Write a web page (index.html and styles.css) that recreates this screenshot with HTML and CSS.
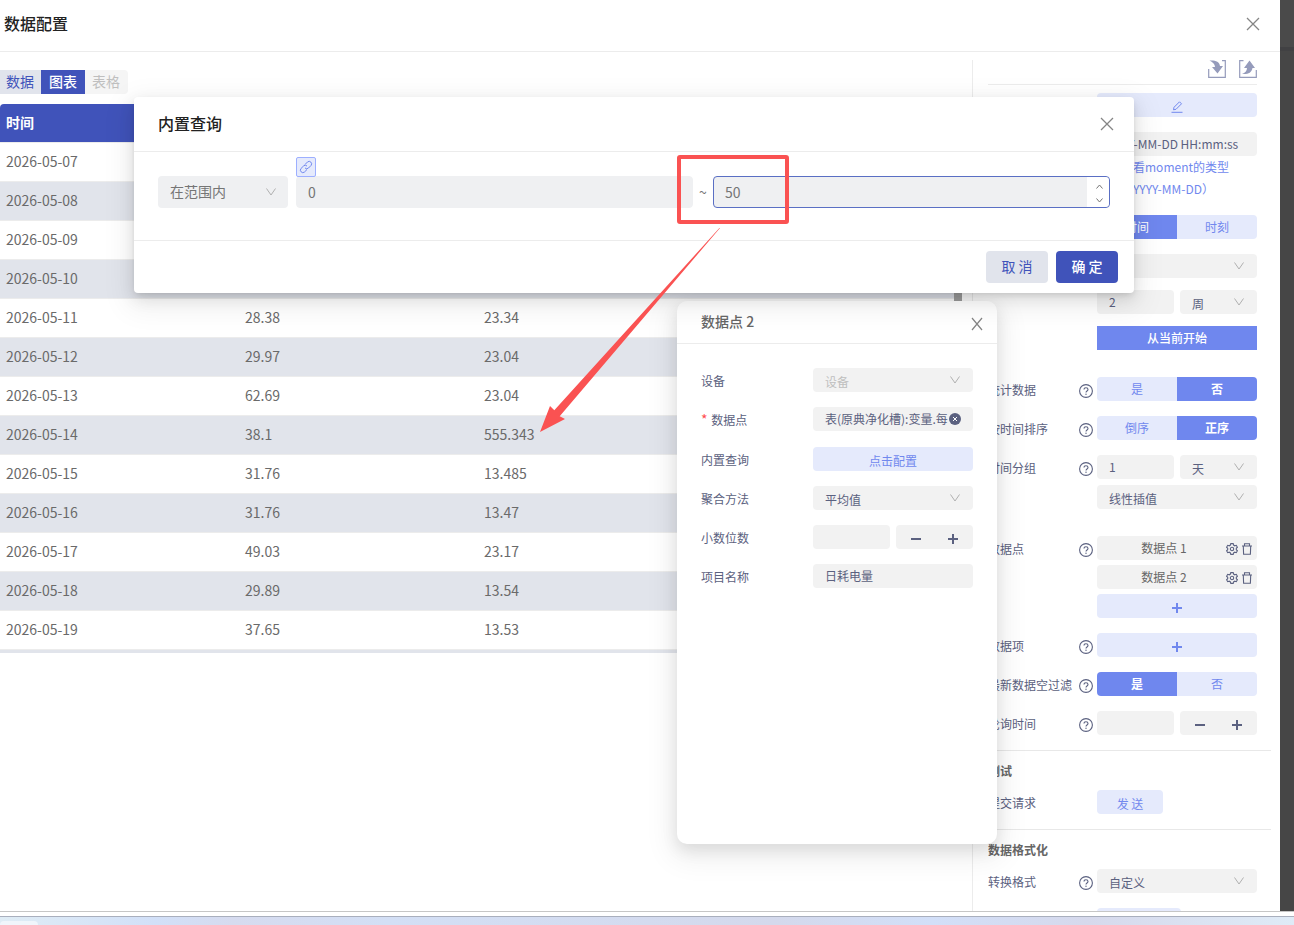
FILE: index.html
```html
<!DOCTYPE html>
<html lang="zh-CN">
<head>
  <meta charset="utf-8">
  <title>数据配置</title>
  <link rel="stylesheet" href="styles.css">
</head>
<body>
  <!-- shared icons -->
  <svg class="icon-defs" aria-hidden="true">
    <symbol id="close" viewBox="0 0 14 14"><path d="M1 1l12 12M13 1L1 13" fill="none" stroke="currentColor" stroke-width="1.3"/></symbol>
    <symbol id="down" viewBox="0 0 10 8"><path d="M0.5 0.5L5 7L9.500 0.5" fill="none" stroke="currentColor"/></symbol>
    <symbol id="help" viewBox="0 0 14 14"><circle cx="7" cy="7" r="6.400" fill="none" stroke="currentColor" stroke-width="1.100"/><path d="M5 5.600c0-1.200.9-1.900 2-1.900s2 .7 2 1.800c0 1.500-2 1.500-2 3" fill="none" stroke="currentColor" stroke-width="1.100"/><circle cx="7" cy="10.200" r=".7" fill="currentColor"/></symbol>
    <symbol id="plus" viewBox="0 0 10 10"><path d="M0 5h10M5 0v10" stroke="currentColor" stroke-width="2"/></symbol>
    <symbol id="minus" viewBox="0 0 10 10"><path d="M0 5h10" stroke="currentColor" stroke-width="2"/></symbol>
    <symbol id="gear" viewBox="0 0 12 12"><path d="M4.800.6h2.400l.4 1.500 1.200.7 1.500-.5 1.100 1.900-1.100 1.100v1.400l1.100 1.100-1.100 1.900-1.500-.5-1.200.7-.4 1.500H4.800l-.4-1.500-1.200-.7-1.500.5L.6 7.800l1.100-1.100V5.300L.6 4.200l1.100-1.900 1.500.5 1.200-.7z" fill="none" stroke="currentColor" stroke-width="1.100"/><circle cx="6" cy="6" r="1.700" fill="none" stroke="currentColor" stroke-width="1.100"/></symbol>
    <symbol id="trash" viewBox="0 0 12 12"><path d="M1 3h10M3.500 3V.8h5V3M2.300 3l.3 8.300h6.800L9.700 3" fill="none" stroke="currentColor" stroke-width="1.100"/></symbol>
  </svg>

  <div class="screen">
    <div class="drawer">
      <header class="drawer-header">
        <h1>数据配置</h1>
        <button class="icon-btn" aria-label="关闭"><svg width="14" height="14"><use href="#close"/></svg></button>
      </header>

      <div class="drawer-body">
        <main class="preview">
          <div class="tabs">
            <button class="tab">数据</button>
            <button class="tab active">图表</button>
            <button class="tab" disabled>表格</button>
          </div>
          <div class="table-wrap">
            <table>
              <thead><tr><th>时间</th><th></th><th></th><th></th></tr></thead>
              <tbody>
                <tr><td>2026-05-07</td><td></td><td></td><td></td></tr>
                <tr><td>2026-05-08</td><td></td><td></td><td></td></tr>
                <tr><td>2026-05-09</td><td></td><td></td><td></td></tr>
                <tr><td>2026-05-10</td><td></td><td></td><td></td></tr>
                <tr><td>2026-05-11</td><td>28.38</td><td>23.34</td><td></td></tr>
                <tr><td>2026-05-12</td><td>29.97</td><td>23.04</td><td></td></tr>
                <tr><td>2026-05-13</td><td>62.69</td><td>23.04</td><td></td></tr>
                <tr><td>2026-05-14</td><td>38.1</td><td>555.343</td><td></td></tr>
                <tr><td>2026-05-15</td><td>31.76</td><td>13.485</td><td></td></tr>
                <tr><td>2026-05-16</td><td>31.76</td><td>13.47</td><td></td></tr>
                <tr><td>2026-05-17</td><td>49.03</td><td>23.17</td><td></td></tr>
                <tr><td>2026-05-18</td><td>29.89</td><td>13.54</td><td></td></tr>
                <tr><td>2026-05-19</td><td>37.65</td><td>13.53</td><td></td></tr>
                <tr><td></td><td></td><td></td><td></td></tr>
              </tbody>
            </table>
            <div class="scroll-thumb"></div>
          </div>
        </main>

        <aside class="settings">
          <div class="toolbar">
            <button class="icon-btn" aria-label="导入">
              <svg width="18" height="18" viewBox="0 0 18 18"><path d="M.7 9v8.300h16.600V.7H14" fill="none" stroke="currentColor" stroke-width="1.200"/><path d="M1.500.5C7 0 11.500 1.500 12 6h3l-5.500 7.500L4 7h3C7 4 4.500 2 1.500.5z" fill="currentColor"/></svg>
            </button>
            <button class="icon-btn" aria-label="导出">
              <svg width="18" height="18" viewBox="0 0 18 18"><path d="M4.500.7H.7v16.600h16.600V10" fill="none" stroke="currentColor" stroke-width="1.200"/><path d="M3 14c6 .5 9.500-1 10.500-6H16L10.500.5 5 8h3c0 3-2 5-5 6z" fill="currentColor"/></svg>
            </button>
          </div>

          <div class="field">
            <span></span>
            <button class="btn-light" aria-label="编辑"><svg width="12" height="12" viewBox="0 0 12 12"><path d="M.5 11.300h11M2.500 8.800l.5-2.500L8.500.8l2 2L5 8.300z" fill="none" stroke="currentColor"/></svg></button>
          </div>
          <div class="field">
            <span></span>
            <div>
              <input class="input" type="text" value="YYYY-MM-DD HH:mm:ss" aria-label="时间格式">
              <a class="tip-link" href="#">点击查看moment的类型<br>（如：YYYY-MM-DD）</a>
            </div>
          </div>
          <div class="field">
            <span></span>
            <div class="segment"><button class="on thin">时间</button><button>时刻</button></div>
          </div>
          <div class="field group">
            <span></span>
            <div class="stack wide">
              <div class="select"><select aria-label="时间范围"><option></option></select><svg><use href="#down"/></svg></div>
              <div class="pair">
                <input class="input" type="text" value="2" aria-label="数量">
                <div class="select"><select aria-label="单位"><option>周</option></select><svg><use href="#down"/></svg></div>
              </div>
              <button class="btn-solid">从当前开始</button>
            </div>
          </div>
          <div class="field">
            <span class="label">统计数据<svg><use href="#help"/></svg></span>
            <div class="segment"><button>是</button><button class="on">否</button></div>
          </div>
          <div class="field">
            <span class="label">按时间排序<svg><use href="#help"/></svg></span>
            <div class="segment"><button>倒序</button><button class="on">正序</button></div>
          </div>
          <div class="field group">
            <label class="label" for="groupCount">时间分组<svg><use href="#help"/></svg></label>
            <div class="stack">
              <div class="pair">
                <input class="input" id="groupCount" type="text" value="1">
                <div class="select"><select aria-label="分组单位"><option>天</option></select><svg><use href="#down"/></svg></div>
              </div>
              <div class="select"><select aria-label="插值"><option>线性插值</option></select><svg><use href="#down"/></svg></div>
            </div>
          </div>
          <div class="field">
            <span class="label">数据点<svg><use href="#help"/></svg></span>
            <div class="stack tight">
              <div class="point"><span>数据点 1</span><button aria-label="设置"><svg><use href="#gear"/></svg></button><button aria-label="删除"><svg><use href="#trash"/></svg></button></div>
              <div class="point"><span>数据点 2</span><button aria-label="设置"><svg><use href="#gear"/></svg></button><button aria-label="删除"><svg><use href="#trash"/></svg></button></div>
              <button class="btn-light" aria-label="添加数据点"><svg width="10" height="10"><use href="#plus"/></svg></button>
            </div>
          </div>
          <div class="field">
            <span class="label">数据项<svg><use href="#help"/></svg></span>
            <button class="btn-light" aria-label="添加数据项"><svg width="10" height="10"><use href="#plus"/></svg></button>
          </div>
          <div class="field">
            <span class="label">最新数据空过滤<svg><use href="#help"/></svg></span>
            <div class="segment"><button class="on">是</button><button>否</button></div>
          </div>
          <div class="field">
            <label class="label" for="polling">轮询时间<svg><use href="#help"/></svg></label>
            <div class="pair">
              <input class="input" id="polling" type="text">
              <div class="stepper"><button aria-label="减"><svg><use href="#minus"/></svg></button><button aria-label="加"><svg><use href="#plus"/></svg></button></div>
            </div>
          </div>

          <h2>测试</h2>
          <div class="field">
            <span class="label">提交请求</span>
            <button class="btn-light send">发 送</button>
          </div>

          <h2>数据格式化</h2>
          <div class="field">
            <label class="label" for="format">转换格式<svg><use href="#help"/></svg></label>
            <div class="select"><select id="format"><option>自定义</option></select><svg><use href="#down"/></svg></div>
          </div>
          <div class="field">
            <span></span>
            <button class="btn-light code" aria-label="编辑格式"></button>
          </div>
        </aside>
      </div>

      <!-- data point panel -->
      <section class="panel">
        <header class="panel-header">
          <h3>数据点 2</h3>
          <button class="icon-btn" aria-label="关闭"><svg width="12" height="14" viewBox="0 0 12 14"><path d="M1 1l10 12M11 1L1 13" fill="none" stroke="currentColor" stroke-width="1.200"/></svg></button>
        </header>
        <div class="panel-body">
          <div class="field">
            <label class="label" for="device">设备</label>
            <div class="select placeholder"><select id="device"><option>设备</option></select><svg><use href="#down"/></svg></div>
          </div>
          <div class="field required">
            <label class="label" for="point"><span><i>*</i> 数据点</span></label>
            <div class="clearable">
              <input class="input" id="point" type="text" value="表(原典净化槽):变量.每">
              <button aria-label="清除"><svg viewBox="0 0 12 12"><circle cx="6" cy="6" r="6" fill="currentColor"/><path d="M4 4l4 4M8 4L4 8" stroke="#fff"/></svg></button>
            </div>
          </div>
          <div class="field">
            <span class="label">内置查询</span>
            <button class="btn-light">点击配置</button>
          </div>
          <div class="field">
            <label class="label" for="method">聚合方法</label>
            <div class="select"><select id="method"><option>平均值</option></select><svg><use href="#down"/></svg></div>
          </div>
          <div class="field">
            <label class="label" for="digits">小数位数</label>
            <div class="pair">
              <input class="input" id="digits" type="text">
              <div class="stepper"><button aria-label="减"><svg><use href="#minus"/></svg></button><button aria-label="加"><svg><use href="#plus"/></svg></button></div>
            </div>
          </div>
          <div class="field">
            <label class="label" for="itemName">项目名称</label>
            <input class="input" id="itemName" type="text" value="日耗电量">
          </div>
        </div>
      </section>

      <!-- query dialog -->
      <section class="dialog" role="dialog" aria-label="内置查询">
        <header class="dialog-header">
          <h2>内置查询</h2>
          <button class="icon-btn" aria-label="关闭"><svg width="14" height="14"><use href="#close"/></svg></button>
        </header>
        <div class="dialog-body">
          <div class="select"><select aria-label="条件"><option>在范围内</option></select><svg><use href="#down"/></svg></div>
          <div class="range-box">
            <input type="text" value="0" aria-label="最小值">
            <button class="link-badge" aria-label="绑定"><svg width="14" height="14" viewBox="0 0 14 14"><path d="M6 4.500l2.600-2.600a2.500 2.500 0 0 1 3.500 3.500L9.500 8a2.500 2.500 0 0 1-3.500 0M8 9.500l-2.600 2.600a2.500 2.500 0 0 1-3.500-3.500L4.500 6A2.500 2.500 0 0 1 8 6" fill="none" stroke="currentColor"/></svg></button>
          </div>
          <span class="tilde">~</span>
          <div class="range-box focused">
            <input type="text" value="50" aria-label="最大值">
            <div class="spin">
              <button aria-label="增加"><svg width="7" height="5" viewBox="0 0 7 5"><path d="M.5 4.500l3-3.500 3 3.500" fill="none" stroke="currentColor"/></svg></button>
              <button aria-label="减少"><svg width="7" height="5" viewBox="0 0 7 5"><path d="M.5.5l3 3.500 3-3.500" fill="none" stroke="currentColor"/></svg></button>
            </div>
          </div>
        </div>
        <footer class="dialog-footer">
          <button>取 消</button>
          <button class="primary">确 定</button>
        </footer>
      </section>

      <svg class="marks" aria-hidden="true">
        <rect x="679" y="157" width="108" height="65" rx="1" fill="none" stroke="#fa5252" stroke-width="4"/>
        <path d="M720 228L559.700 416.300L565 419L540 432L550 406L554.300 410.300L719.400 228z" fill="#fa5252"/>
      </svg>
    </div>
    <div class="backdrop"></div>
  </div>
  <div class="taskbar"><div class="task"></div></div>
</body>
</html>
```
FILE: styles.css
```css
* {
  box-sizing: border-box;
}

body {
  margin: 0;
  height: 100vh;
  display: flex;
  flex-direction: column;
  overflow: hidden;
  font-family: "Noto Sans CJK SC", "Noto Sans", sans-serif;
  font-size: 12px;
  line-height: 24px;
  color: #5b6180;
  background: #fff;
}

h1, h2, h3 {
  margin: 0;
  font-weight: 500;
}

button, input, select {
  margin: 0;
  padding: 0;
  border: none;
  outline: none;
  font: inherit;
  color: inherit;
  background: none;
}

button {
  cursor: pointer;
}

svg {
  display: block;
}

.icon-defs {
  position: absolute;
  width: 0;
  height: 0;
}

.icon-btn {
  color: #858585;
}

/* page frame */
.screen {
  flex: 1;
  min-height: 0;
  display: flex;
}

.drawer {
  position: relative;
  flex: 1;
  min-width: 0;
  display: flex;
  flex-direction: column;
  overflow: hidden;
}

.backdrop {
  width: 14px;
  background: linear-gradient(#4a4a4a 47px, #414143 47px, #414143 51px, #464646 51px);
}

.taskbar {
  height: 14px;
  border-top: 1px solid #c6c6c6;
  background: linear-gradient(90deg, #dfecf5, #d2e0f8 12%, #d6dbef 18%, #d3dff5 30%, #d4d9ec 60%, #d2dff8 72%, #d6d9ec 84%, #dfebf7) 0 4px no-repeat;
}

.taskbar::before {
  content: "";
  display: block;
  height: 4px;
  border-bottom: 1px solid #a9afbd;
}

.task {
  width: 38px;
  height: 9px;
  margin-top: 4px;
  border-radius: 4px 4px 0 0;
  background: #f0f5fb;
}

.drawer-header {
  display: flex;
  align-items: center;
  justify-content: space-between;
  height: 52px;
  padding: 0 20px 4px 4px;
  border-bottom: 1px solid #ececec;
}

.drawer-header h1,
.dialog-header h2 {
  padding-bottom: 2px;
  font-size: 16px;
  color: #222;
}

.drawer-body {
  flex: 1;
  min-height: 0;
  display: flex;
}

/* table preview */
.preview {
  flex: 1;
  min-width: 0;
  padding: 18px 10px 0 0;
}

.tabs {
  display: flex;
  margin-bottom: 10px;
  font-size: 14px;
  line-height: 22px;
}

.tab {
  height: 24px;
  padding: 0 8px 2px;
  color: #4053ba;
  background: #e1e4ec;
}

.tab:first-child {
  padding: 0 7px 2px 6px;
}

.tab.active {
  font-weight: 500;
  color: #fff;
  background: #4053ba;
}

.tab:disabled {
  padding: 0 8px 2px 7px;
  border-radius: 0 4px 4px 0;
  color: #bfbfbf;
  background: #f5f5f5;
}

.table-wrap {
  position: relative;
  height: 549px;
  padding-right: 6px;
  overflow: hidden;
}

table {
  width: 100%;
  table-layout: fixed;
  border-collapse: separate;
  border-spacing: 0;
  font-size: 14px;
  color: #6a6a6a;
}

th, td {
  height: 39px;
  padding: 0 6px 2px;
  text-align: left;
  border-bottom: 1px solid #ececec;
}

th {
  font-weight: 700;
  color: #fff;
  background: #4053ba;
}

th:first-child {
  border-top-left-radius: 4px;
}

tbody tr:nth-child(even) {
  background: #e1e4eb;
}

.scroll-thumb {
  position: absolute;
  top: 39px;
  right: 0;
  width: 8px;
  height: 180px;
  background: #a0a0a0;
}

/* settings column */
.settings {
  width: 308px;
  margin-top: 8px;
  padding: 0 23px 0 15px;
  border-left: 1px solid #ececec;
  overflow: hidden;
}

.toolbar {
  display: flex;
  justify-content: flex-end;
  gap: 13px;
  height: 25px;
  margin-bottom: 8px;
  border-bottom: 1px solid #ececec;
}

.toolbar .icon-btn {
  height: 18px;
  color: #959bbb;
}

.settings h2 {
  margin-right: -14px;
  padding: 8px 0 7px;
  border-top: 1px solid #e8e8e8;
  font-size: 12px;
  font-weight: 700;
  color: #666;
}

.field {
  display: grid;
  grid-template-columns: 1fr 160px;
  margin-bottom: 15px;
}

.field.group {
  margin-bottom: 27px;
}

.label {
  display: flex;
  align-items: center;
  justify-content: space-between;
  height: 24px;
  padding: 1px 4px 0 0;
}

.label svg {
  width: 14px;
  height: 14px;
  margin-top: 3px;
}

.label i {
  margin-right: 1px;
  font-size: 14px;
  font-style: normal;
  color: #ff4d4f;
}

.input {
  display: block;
  width: 100%;
  min-width: 0;
  height: 24px;
  padding: 0 12px;
  border-radius: 4px;
  background: #f2f2f2;
}

.select {
  position: relative;
  min-width: 0;
}

.select select {
  display: block;
  width: 100%;
  height: 24px;
  padding: 2px 12px 0;
  border-radius: 4px;
  appearance: none;
  background: #f2f2f2;
}

.select svg {
  position: absolute;
  top: 8px;
  right: 13px;
  width: 10px;
  height: 8px;
  color: #b0b0b0;
  pointer-events: none;
}

.select.placeholder select {
  color: #bfbfbf;
}

.btn-light {
  display: flex;
  align-items: center;
  justify-content: center;
  height: 24px;
  padding-top: 3px;
  border-radius: 4px;
  color: #7188ee;
  background: #e5eafc;
}

.btn-solid {
  height: 24px;
  font-weight: 500;
  color: #fff;
  background: #6f87ee;
}

.send {
  width: 66px;
}

.code {
  width: 84px;
}

.tip-link {
  display: block;
  line-height: 22px;
  color: #7188ee;
  text-decoration: none;
  white-space: nowrap;
}

.segment {
  display: flex;
  border-radius: 4px;
  overflow: hidden;
}

.segment button {
  flex: 1;
  height: 24px;
  color: #7188ee;
  background: #e5eafc;
}

.segment .on {
  font-weight: 700;
  color: #fff;
  background: #6f87ee;
}

.segment .thin {
  font-weight: 400;
}

.stack {
  display: grid;
  gap: 6px;
}

.stack.wide {
  gap: 12px;
}

.stack.tight {
  gap: 5px;
}

.pair {
  display: grid;
  grid-template-columns: 1fr 1fr;
  gap: 6px;
}

.point {
  display: flex;
  align-items: center;
  gap: 3px;
  height: 24px;
  padding: 0 4px;
  border-radius: 4px;
  color: #666;
  background: #f2f2f2;
}

.point span {
  flex: 1;
  padding-left: 4px;
  text-align: center;
}

.point button {
  color: #5b6180;
}

.point svg {
  width: 12px;
  height: 12px;
  margin-top: 1px;
}

.stepper {
  display: flex;
  align-items: center;
  justify-content: space-around;
  height: 24px;
  padding: 3px 2px 0;
  border-radius: 4px;
  background: #f2f2f2;
}

.stepper svg {
  width: 10px;
  height: 10px;
}

/* data point panel */
.panel {
  position: absolute;
  top: 301px;
  right: 283px;
  width: 320px;
  height: 543px;
  border-radius: 10px;
  background: #fff;
  box-shadow: 0 6px 16px rgba(0, 0, 0, 0.1), 0 9px 28px 8px rgba(0, 0, 0, 0.06);
}

.panel-header {
  display: flex;
  align-items: center;
  justify-content: space-between;
  height: 43px;
  padding: 0 14px 0 24px;
  border-bottom: 1px solid #ececec;
}

.panel-header h3 {
  padding-bottom: 2px;
  font-size: 14px;
  color: #666;
}

.panel-header svg {
  margin-top: 3px;
}

.panel-body {
  padding: 24px;
}

.required {
  min-height: 25px;
}

.clearable {
  position: relative;
}

.clearable button {
  position: absolute;
  top: 6px;
  right: 12px;
  width: 12px;
  height: 12px;
}

/* query dialog */
.dialog {
  position: absolute;
  top: 97px;
  left: 134px;
  right: 146px;
  border-radius: 4px;
  background: #fff;
  box-shadow: 0 3px 6px -2px rgba(0, 0, 0, 0.14), 0 6px 16px rgba(0, 0, 0, 0.1), 0 9px 28px 8px rgba(0, 0, 0, 0.06);
  font-size: 14px;
  color: #757575;
}

.dialog-header {
  display: flex;
  align-items: center;
  justify-content: space-between;
  height: 55px;
  padding: 0 20px 0 24px;
  border-bottom: 1px solid #ececec;
}

.dialog-body {
  display: flex;
  padding: 24px 24px 32px;
}

.dialog-body .select {
  width: 130px;
  margin-right: 8px;
}

.dialog-body .select select {
  height: 32px;
  padding: 0 12px 2px;
  background: #eff0f2;
}

.dialog-body .select svg {
  top: 12px;
  right: 12px;
}

.range-box {
  position: relative;
  flex: 1;
  min-width: 0;
  display: flex;
  height: 32px;
  border: 1px solid #eff0f2;
  border-radius: 4px;
  background: #eff0f2;
}

.range-box input {
  flex: 1;
  min-width: 0;
  padding: 0 11px;
}

.range-box.focused {
  border-color: #5a6fc4;
}

.link-badge {
  position: absolute;
  top: -20px;
  left: -1px;
  display: flex;
  align-items: center;
  justify-content: center;
  width: 20px;
  height: 20px;
  border: 1px solid #9dafff;
  border-radius: 2px;
  color: #7188ee;
  background: #e5eafc;
}

.tilde {
  width: 20px;
  line-height: 32px;
  text-align: center;
}

.spin {
  display: flex;
  flex-direction: column;
  width: 22px;
  border-radius: 0 4px 4px 0;
  background: #fff;
}

.spin button {
  flex: 1;
  display: flex;
  align-items: center;
  justify-content: center;
  padding-left: 2px;
}

.spin button:first-child {
  padding-top: 2px;
}

.dialog-footer {
  display: flex;
  justify-content: flex-end;
  gap: 8px;
  padding: 10px 16px;
  border-top: 1px solid #ececec;
}

.dialog-footer button {
  width: 62px;
  height: 32px;
  padding-bottom: 2px;
  border-radius: 4px;
  color: #4053ba;
  background: #e1e4ec;
}

.dialog-footer .primary {
  font-weight: 500;
  color: #fff;
  background: #4053ba;
}

/* red box and arrow over everything */
.marks {
  position: absolute;
  top: 0;
  left: 0;
  width: 100%;
  height: 100%;
  pointer-events: none;
}
```
